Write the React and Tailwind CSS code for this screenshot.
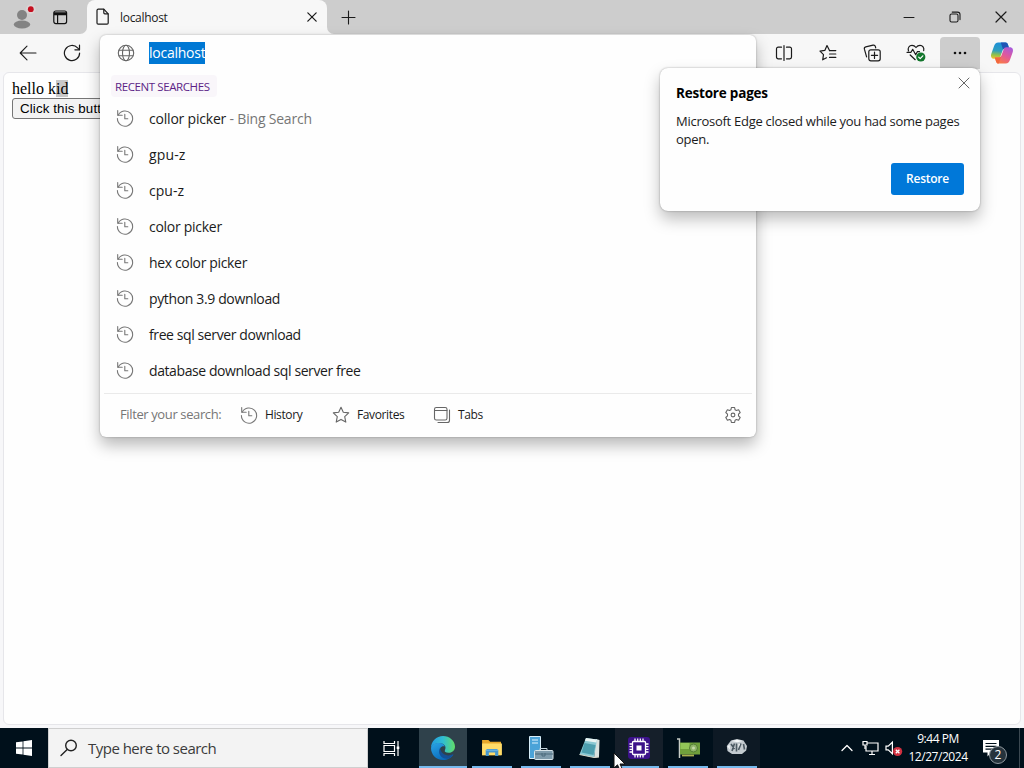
const searches = [
    { text: 'collor picker', source: 'Bing Search', tracking: 'tracking-[-0.2px]' },
    { text: 'gpu-z', tracking: 'tracking-[0.15px]' },
    { text: 'cpu-z', tracking: 'tracking-[0.05px]' },
    { text: 'color picker', tracking: 'tracking-[-0.28px]' },
    { text: 'hex color picker', tracking: 'tracking-[-0.35px]' },
    { text: 'python 3.9 download', tracking: 'tracking-[-0.36px]' },
    { text: 'free sql server download', tracking: 'tracking-[-0.4px]' },
    { text: 'database download sql server free', tracking: 'tracking-[-0.41px]' },
];

const Icon = ({ size = 18, box = 18, color = '#1b1b1b', width = 1.1, children, className = '' }) => (
    <svg
        width={size}
        height={size}
        viewBox={`0 0 ${box} ${box}`}
        fill="none"
        stroke={color}
        strokeWidth={width}
        strokeLinecap="round"
        strokeLinejoin="round"
        className={`shrink-0 ${className}`}
    >
        {children}
    </svg>
);

const HistoryIcon = () => (
    <Icon color="#777" width={1.1}>
        <path d="M2.2 6.2A7.6 7.6 0 1 1 1.4 9.6" />
        <path d="M1.7 1.6v4.6h4.5" />
        <path d="M8.8 5.3v4.4h3" />
    </Icon>
);

const CloseIcon = ({ size = 12, color = '#1b1b1b', width = 1.2 }) => (
    <Icon size={size} box={12} color={color} width={width}>
        <path d="M1 1l10 10M11 1L1 11" />
    </Icon>
);

const TabStrip = () => (
    <div className="h-[34px] shrink-0 bg-[#cdcdcd] flex items-stretch">
        <div className="w-[87px] flex items-center">
            <svg width="24" height="26" viewBox="0 0 24 26" className="ml-3">
                <circle cx="10" cy="11" r="5" fill="#838383" />
                <ellipse cx="10" cy="20.500" rx="8.2" ry="4" fill="#838383" />
                <circle cx="18.8" cy="5.2" r="4.8" fill="#dcd3d3" />
                <circle cx="18.8" cy="5.2" r="2.9" fill="#c50f1f" />
            </svg>
            <svg width="15" height="15" viewBox="0 0 15 15" fill="none" stroke="#111" className="ml-[17px]">
                <rect x="0.8" y="1" width="12.8" height="12.6" rx="2" strokeWidth="1.2" />
                <path d="M1 3h12.6M1 4.4h12.6" strokeWidth="1.6" />
                <path d="M4.6 4v9.6" strokeWidth="1.2" />
            </svg>
        </div>
        <div className="relative w-[240px] bg-[#f7f7f7] rounded-t-lg flex items-center pl-[9px] pr-[10px]">
            <svg width="7" height="7" viewBox="0 0 7 7" className="absolute -left-[7px] bottom-0">
                <path d="M7 0v7H0A7 7 0 0 0 7 0z" fill="#f7f7f7" />
            </svg>
            <svg width="7" height="7" viewBox="0 0 7 7" className="absolute -right-[7px] bottom-0">
                <path d="M0 0v7h7A7 7 0 0 1 0 0z" fill="#f7f7f7" />
            </svg>
            <Icon width={1.2}>
                <path d="M3.2 1.2h5.6l4.4 4.6v9.2a1.2 1.2 0 0 1-1.2 1.2H3.2A1.2 1.2 0 0 1 2 15V2.4a1.2 1.2 0 0 1 1.2-1.2z" transform="translate(-1 0)" />
                <path d="M7.8 1.4v3.4a1 1 0 0 0 1 1h3.2" />
            </Icon>
            <span className="mt-px ml-[6px] text-[12px] leading-4 text-[#1b1b1b] tracking-[-0.3px]">localhost</span>
            <span className="ml-auto"><CloseIcon size={10} width={1.5} /></span>
        </div>
        <div className="flex-1 flex items-center">
            <Icon size={15} box={15} className="ml-[14px]"><path d="M7.5 1v13M1 7.5h13" /></Icon>
            <div className="ml-auto flex items-center h-full">
                <div className="w-[46px] flex justify-center">
                    <Icon size={12} box={12} width={1}><path d="M1 6.5h10" /></Icon>
                </div>
                <div className="w-[46px] flex justify-center">
                    <Icon size={12} box={12}>
                        <rect x="1" y="3" width="8" height="8" rx="1.6" />
                        <path d="M3.2 1.1h5.3A2.5 2.5 0 0 1 11 3.6v5" />
                    </Icon>
                </div>
                <div className="w-[46px] flex justify-center"><CloseIcon /></div>
            </div>
        </div>
    </div>
);

const CopilotIcon = () => (
    <svg width="24" height="22" viewBox="0 0 24 22" className="shrink-0">
        <defs>
            <linearGradient id="cpA" x1="0.3" y1="0" x2="0.2" y2="1">
                <stop offset="0" stopColor="#1b8fd8" />
                <stop offset="0.5" stopColor="#2f9fbe" />
                <stop offset="0.75" stopColor="#8fc04c" />
                <stop offset="1" stopColor="#f3c62c" />
            </linearGradient>
            <linearGradient id="cpB" x1="0.9" y1="0" x2="0.3" y2="1">
                <stop offset="0" stopColor="#a45be0" />
                <stop offset="0.5" stopColor="#e0589c" />
                <stop offset="1" stopColor="#fb7a45" />
            </linearGradient>
        </defs>
        <path d="M15.600 0.500H8.300C6 0.500 4.700 2 4 4.200L1.400 11.500c-1.100 3.200.2 5.300 2.700 5.300h3.600c1.500 0 2.200-.9 2.700-2.300l2-5.600c.5-1.400 1.300-2.400 2.800-2.400h4L18 2.800C17.500 1.200 16.800 .5 15.600 .5z" fill="url(#cpA)" />
        <path d="M10.800 .5h4.800c1.200 0 1.900.7 2.400 2.300l1.200 3.700h-4c-1.200 0-1.700.3-2.200 1z" fill="#1f55b5" />
        <path d="M8.400 21.500h7.300c2.300 0 3.600-1.500 4.300-3.700l2.600-7.300c1.100-3.200-.2-5.300-2.700-5.300h-3.600c-1.500 0-2.200.9-2.700 2.300l-2 5.600c-.5 1.400-1.300 2.400-2.800 2.400H4.800L6 19.200c.5 1.600 1.200 2.300 2.400 2.300z" fill="url(#cpB)" />
        <path d="M4.800 15.500h4c1.200 0 1.700-.3 2.300-1l-2.400 7C7.200 21.500 6.500 20.800 6 19.200z" fill="#f2683c" />
    </svg>
);

const Toolbar = () => (
    <div className="h-[38px] shrink-0 bg-[#f7f7f7] flex items-center">
        <Icon className="ml-[19px]"><path d="M17 9H1.500M8 2.200L1.200 9l6.800 6.800" /></Icon>
        <Icon className="ml-[26px]" width={1.2}>
            <path d="M16.600 9A7.600 7.600 0 1 1 14.600 3.900L16.400 5.700" />
            <path d="M16.500 1.200v4.600h-4.600" />
        </Icon>
        <div className="ml-auto flex items-center h-full">
            <div className="w-11 flex justify-center">
                <Icon width={1.2}>
                    <path d="M6.500 3.200H3.200A1.700 1.700 0 0 0 1.500 4.900v8.200a1.700 1.700 0 0 0 1.700 1.700h3.300M11.500 3.200h3.300a1.700 1.700 0 0 1 1.700 1.700v8.200a1.700 1.700 0 0 1-1.700 1.700h-3.300M9 1.500v15" />
                </Icon>
            </div>
            <div className="w-11 flex justify-center">
                <Icon width={1.2}>
                    <path d="M10.500 6.600L8 1.600 5.800 6.400 1 7.100l3.500 3.600-.8 5.100 3.800-2" />
                    <path d="M10.500 6.600h6.300M10.500 10h6.300M10.500 13.400h6.300" />
                </Icon>
            </div>
            <div className="w-11 flex justify-center">
                <Icon width={1.2}>
                    <path d="M3.600 12.900L1.400 5.200a2 2 0 0 1 1.400-2.400L10 1.200a2 2 0 0 1 2.400 1.400l.3 1.200" />
                    <rect x="5.800" y="5.800" width="11.400" height="11" rx="2" />
                    <path d="M11.500 8.200v6.200M8.400 11.300h6.200" />
                </Icon>
            </div>
            <div className="w-11 flex justify-center">
                <Icon width={1.200} size={20} box={20}>
                    <path d="M2.500 8C1.400 5 3.300 2.300 6 2.300c1.700 0 3 .9 4 2.200 1-1.300 2.300-2.200 4-2.200 2.600 0 4.400 2.500 3.700 5.300" />
                    <path d="M1 9.300h4l1.700-3 3 5.400 1.600-3h2.200M4.200 12l5 4.700" />
                    <circle cx="14.800" cy="14" r="4.600" fill="#13762d" stroke="none" />
                    <path d="M12.700 14.100l1.500 1.500 2.600-2.800" stroke="#fff" />
                </Icon>
            </div>
            <div className="w-10 h-8 ml-[2px] rounded-t bg-[#cdcdcd] flex justify-center items-center">
                <svg width="16" height="4" viewBox="0 0 16 4" fill="#111" className="-mt-px">
                    <circle cx="3" cy="2" r="1.300" /><circle cx="8" cy="2" r="1.300" /><circle cx="13" cy="2" r="1.300" />
                </svg>
            </div>
            <div className="w-11 flex justify-center"><CopilotIcon /></div>
        </div>
    </div>
);

const FilterButton = ({ label, className, children }) => (
    <div className={`flex items-center gap-[7px] ${className}`}>
        {children}
        <span className="text-[12px] text-[#1b1b1b] tracking-[-0.38px]">{label}</span>
    </div>
);

const AddressDropdown = () => (
    <div className="absolute left-[100px] top-[35px] w-[656px] h-[402px] bg-[#fefefe] rounded-[6px] shadow-[0_0_2px_rgba(0,0,0,0.3),0_8px_16px_rgba(0,0,0,0.28)] flex flex-col">
        <div className="h-9 flex items-center pl-[17px]">
            <Icon color="#666">
                <circle cx="9" cy="9" r="7.700" />
                <ellipse cx="9" cy="9" rx="3.500" ry="7.700" />
                <path d="M2 6.200h14M2 11.800h14" />
            </Icon>
            <span className="ml-[14px] h-[22px] w-[56px] bg-[#0078d4] text-white text-[14px] leading-[22px] tracking-[-0.25px] whitespace-nowrap">localhost</span>
        </div>
        <div className="h-[30px] flex items-center pl-[11px]">
            <span className="w-[106px] h-[22px] pl-1 rounded bg-[#f9f6fa] text-[11.500px] leading-[23px] text-[#5c1f87] tracking-[-0.4px] whitespace-nowrap">RECENT SEARCHES</span>
        </div>
        <div className="flex flex-col">
            {searches.map((s) => (
                <div key={s.text} className="h-9 flex items-center pl-4">
                    <span className="-mt-[3px]"><HistoryIcon /></span>
                    <span className={`-mt-[2px] ml-[15px] text-[14px] text-[#1b1b1b] whitespace-nowrap ${s.tracking}`}>
                        {s.text}
                        {s.source && <span className="text-[#767676]"> - {s.source}</span>}
                    </span>
                </div>
            ))}
        </div>
        <div className="mt-1 mx-1 border-t border-[#eaeaea]" />
        <div className="h-[42px] flex items-center pl-5 pr-[14px]">
            <span className="w-[102px] text-[13px] text-[#767676] tracking-[-0.38px] whitespace-nowrap">Filter your search:</span>
            <FilterButton label="History" className="ml-[18px] w-[92px]"><HistoryIcon /></FilterButton>
            <FilterButton label="Favorites" className="w-[101px]">
                <Icon color="#666">
                    <path d="M9 1.300l2.300 5 5.400.6-4 3.700 1.100 5.500L9 13.400l-4.800 2.700 1.100-5.500-4-3.700 5.400-.6z" />
                </Icon>
            </FilterButton>
            <FilterButton label="Tabs">
                <Icon color="#666">
                    <rect x="1.500" y="1.500" width="12.500" height="12.500" rx="1.800" />
                    <path d="M1.500 4.500H14M16.500 4v10.200a2.300 2.300 0 0 1-2.300 2.300H5" />
                </Icon>
            </FilterButton>
            <Icon className="ml-auto" color="#666">
                <path d="M7.400 1.500h3.200l.5 2.300 1.300.7 2.200-.8 1.600 2.800-1.700 1.600v1.800l1.700 1.600-1.600 2.800-2.200-.8-1.300.7-.5 2.300H7.400l-.5-2.300-1.300-.7-2.200.8-1.600-2.800 1.700-1.600V8.100L1.800 6.500l1.600-2.800 2.200.8 1.300-.7z" />
                <circle cx="9" cy="9" r="1.900" />
            </Icon>
        </div>
    </div>
);

const RestoreDialog = () => (
    <div className="absolute left-[660px] top-[68px] w-[320px] h-[143px] bg-[#fefefe] rounded-lg shadow-[0_0_2px_rgba(0,0,0,0.35),0_8px_16px_rgba(0,0,0,0.26)] pl-4 pr-[10px] flex flex-col">
        <div className="flex items-start justify-between pt-[9px]">
            <h2 className="mt-[7px] text-[13.500px] leading-[18px] font-bold text-black tracking-[-0.2px]">Restore pages</h2>
            <CloseIcon color="#555" width={0.9} />
        </div>
        <p className="mt-[10px] w-[300px] text-[13px] leading-[18px] text-[#1b1b1b] tracking-[-0.27px]">
            Microsoft Edge closed while you had some pages<br />open.
        </p>
        <button className="mt-[15px] ml-auto mr-[6px] w-[73px] h-8 rounded-[3px] bg-[#0078d9] text-white text-[12px] font-semibold tracking-[-0.25px]">Restore</button>
    </div>
);

const TaskItem = ({ width, bg = '', bar = 'w-10', children }) => (
    <div className={`relative h-10 flex justify-center items-center ${width} ${bg}`}>
        {children}
        <span className={`absolute bottom-0 h-[2px] bg-[#76b9ed] ${bar}`} />
    </div>
);

const Taskbar = () => (
    <div className="h-10 shrink-0 bg-[#00101b] flex items-center">
        <div className="w-12 flex justify-center">
            <svg width="16" height="16" viewBox="0 0 16 16" fill="#fff">
                <path d="M0 2.300l6.600-.9v6.200H0zM7.400 1.200L16 0v7.600H7.400zM0 8.400h6.600v6.200L0 13.700zM7.400 8.400H16V16l-8.600-1.200z" />
            </svg>
        </div>
        <div className="w-80 h-10 bg-[#f3f3f3] border border-[#cfcfcf] flex items-center pl-[11px]">
            <Icon width={1.400} color="#222"><circle cx="11" cy="6.500" r="5.300" /><path d="M7.200 10.400L1 16.600" /></Icon>
            <span className="ml-[10px] text-[15px] text-[#3b3b3b] tracking-[-0.52px]">Type here to search</span>
        </div>
        <div className="w-[51px] pl-[15px]">
            <svg width="17" height="17" viewBox="0 0 17 17" fill="none" stroke="#fff" strokeWidth="1.200">
                <path d="M1 1v2.500h10.500V1M1 16v-2.500h10.500V16M1 5.500h10.500v6H1zM15 1v15" />
                <path d="M13.700 6.500h2.600v2.600h-2.600z" fill="#fff" stroke="none" />
            </svg>
        </div>
        <TaskItem width="w-12" bg="bg-[#2f414b]" bar="w-12">
            <svg width="26" height="26" viewBox="0 0 26 26">
                <defs>
                    <linearGradient id="edgeTop" x1="0" y1="0.500" x2="1" y2="0.500">
                        <stop offset="0" stopColor="#239be0" />
                        <stop offset="0.500" stopColor="#30bdd2" />
                        <stop offset="1" stopColor="#61dc68" />
                    </linearGradient>
                    <linearGradient id="edgeBody" x1="0" y1="0" x2="0.600" y2="1">
                        <stop offset="0" stopColor="#2aa4e6" />
                        <stop offset="1" stopColor="#0868ba" />
                    </linearGradient>
                </defs>
                <path d="M1 13C1 6 6.500 1 13 1s12 5 12 10.500c0 4-3 6.300-6.500 6.300-3 0-4.300-1.200-3.600-2.500 2-4-1-7-5-7C5 8.300 1.700 10 1 13z" fill="url(#edgeTop)" />
                <path d="M1 13c.7-3.500 4-4.900 8-4.900 3 0 5.200 1.500 5.900 3.400-3.700-1-5.700 2-4.700 5 1.300 4 7 6.500 13.200 3C21.500 23 17.500 25 13 25 6 25 1 19.500 1 13z" fill="url(#edgeBody)" />
                <path d="M10 13c-3 6 2 11.500 8 10.800 2.500-1 4.500-2.800 5.400-4.800-6.200 3.500-12.400 0-13.400-6z" fill="#145096" />
            </svg>
        </TaskItem>
        <TaskItem width="w-[50px]">
            <svg width="22" height="18" viewBox="0 0 24 20">
                <path d="M1 1h7l2 2h12v15H1z" fill="#e7a82c" />
                <path d="M1 5h22v13H1z" fill="#ffdc68" />
                <path d="M5 19v-6.500l1.500-1.500h11l1.500 1.500V19h-3.500v-4h-7v4z" fill="#4698cf" />
                <path d="M5 12.500h14" stroke="#78bee8" />
            </svg>
        </TaskItem>
        <TaskItem width="w-12">
            <svg width="26" height="26" viewBox="0 0 26 26" className="-mt-px">
                <path d="M1.500 1.500h11v22h-11z" fill="#4ba3d8" stroke="#d8eef9" />
                <path d="M4 5h6M4 8h6" stroke="#dff4ff" />
                <path d="M12 15v-1.500h7V15" stroke="#c4d5dd" fill="none" />
                <rect x="6.500" y="15.500" width="18.500" height="9" rx="1" fill="#7e9bac" stroke="#d6e3e9" />
                <path d="M7 19h18M14 18v3h3v-3" stroke="#4b6a7c" fill="none" />
            </svg>
        </TaskItem>
        <TaskItem width="w-[50px]">
            <svg width="24" height="24" viewBox="0 0 24 24">
                <path d="M18 3l3.500 1-.5 17-5 1z" fill="#d9e2df" />
                <path d="M8 2l11 1.500-3 18-14.500-3z" fill="#8bc9d3" />
                <path d="M6.500 7l11 2-2 10-12-2.500z" fill="#4d9eae" />
                <path d="M8 2l11 1.500-.7 3L6.800 4.700z" fill="#e9f4f3" />
                <path d="M1.500 18.500l14.500 3 5-.5" stroke="#d8d6c8" fill="none" />
            </svg>
        </TaskItem>
        <TaskItem width="w-[48px]" bg="bg-[#151f2a]">
            <svg width="22" height="22" viewBox="0 0 22 22">
                <rect width="22" height="22" rx="3" fill="#3c128a" />
                <g fill="none" stroke="#fff" strokeWidth="1.300">
                    <rect x="4.500" y="4.500" width="13" height="13" rx="1" />
                    <path d="M7 1.500v3M9.700 1.500v3M12.300 1.500v3M15 1.500v3M7 17.500v3M9.700 17.500v3M12.300 17.500v3M15 17.500v3M1.500 7h3M1.500 9.700h3M1.500 12.300h3M1.500 15h3M17.500 7h3M17.500 9.700h3M17.500 12.300h3M17.500 15h3" />
                </g>
                <rect x="8.500" y="8.500" width="5" height="5" fill="#fff" />
            </svg>
        </TaskItem>
        <TaskItem width="w-[50px]">
            <svg width="25" height="21" viewBox="0 0 25 21">
                <path d="M1 1h2.500v19" fill="none" stroke="#c8cdc8" strokeWidth="1.500" />
                <path d="M4 4.500h20v12H4z" fill="#6fa03c" />
                <path d="M4.500 5h9v6h-9z" fill="#92c658" />
                <circle cx="17.500" cy="10" r="4" fill="#8fb56a" stroke="#547f35" />
                <circle cx="17.500" cy="10" r="1.500" fill="#c4d8a8" />
                <path d="M6 17.500h12" stroke="#a9b04f" strokeWidth="1.800" />
            </svg>
        </TaskItem>
        <TaskItem width="w-[47px]" bg="bg-[#0d1924]">
            <svg width="22" height="16" viewBox="0 0 22 16" className="-mt-[2px]">
                <path d="M5 1.500L11 0l6.500 1.500L21 7l-.8 4.500L16 15H6l-4.500-3L.8 7z" fill="#c3cacf" />
                <path d="M5 5l3.500 5M8.500 4.500L6 12M15 4.500L12.500 11M17.500 5l1 5.500M10.500 4.500v8" fill="none" stroke="#4d5a63" strokeWidth="1.600" />
                <path d="M5.500 2L11 .8l5.500 1.200-5 1.200zM1.500 7.500l2-2 .5 5zM12.500 5h1.500l-1.500 4z" fill="#f4f7f8" />
            </svg>
        </TaskItem>
        <div className="ml-auto flex items-center">
            <Icon size={14} box={14} color="#fff" width={1.300}><path d="M2 9.500l5-5 5 5" /></Icon>
            <svg width="17" height="16" viewBox="0 0 17 16" fill="none" stroke="#fff" strokeWidth="1.200" className="ml-[8px]">
                <path d="M5 3h11v8H4V6M7 14.500h6M10 11v3.500" />
                <path d="M1 1.500h4V5H1zM3 5v4" />
            </svg>
            <svg width="18" height="17" viewBox="0 0 18 17" fill="none" className="ml-[6px]">
                <path d="M1 6.200h2.200l4.200-4v11.600l-4.200-4H1z" stroke="#fff" strokeWidth="1.200" />
                <circle cx="12.600" cy="11.500" r="4.600" fill="#d13040" />
                <path d="M10.800 9.700l3.600 3.600M14.400 9.700l-3.600 3.600" stroke="#fff" strokeWidth="1.300" />
            </svg>
            <div className="w-[62px] ml-[4px] text-center text-[12px] leading-[18px] text-white tracking-[-0.45px] whitespace-nowrap">
                <div>9:44 PM</div>
                <div>12/27/2024</div>
            </div>
            <div className="relative ml-[12px] w-[43px] h-10">
                <svg width="18" height="18" viewBox="0 0 18 18" className="absolute left-[2px] top-3">
                    <path d="M0 0h16v12.500H8l-3.500 4v-4H0z" fill="#fff" />
                    <path d="M2.500 3.500h11M2.500 6.300h11M2.500 9.100h11" stroke="#00101b" strokeWidth="1.200" />
                </svg>
                <span className="absolute left-[8px] top-[18px] w-[18px] h-[18px] rounded-full bg-[#26333c] border border-[#8e979d] text-white text-[12px] leading-4 text-center">2</span>
                <span className="absolute right-[4px] top-0 h-10 border-l border-[#3b4851]" />
            </div>
        </div>
    </div>
);

export default function App() {
    return (
        <div className="relative w-[1024px] h-[768px] overflow-hidden bg-[#f7f7f9] flex flex-col font-['Open_Sans','Noto_Sans',sans-serif]">
            <TabStrip />
            <Toolbar />
            <main className="flex-1 mx-[3px] mb-[3px] bg-[#fefefe] border border-[#e6e6ea] rounded-[6px] pl-[8px] pt-[7px] flex flex-col items-start">
                <p className="font-['Liberation_Serif',serif] text-[16px] leading-[18px] text-black">
                    hello k<span className="bg-[#c8c8c8]">id</span>
                </p>
                <button className="h-[21px] px-[7px] border border-[#767676] rounded-[3px] bg-[#f3f3f3] text-black font-['Liberation_Sans',sans-serif] text-[13.333px] leading-[18px] tracking-[0.12px]">
                    Click this button
                </button>
            </main>
            <Taskbar />
            <AddressDropdown />
            <RestoreDialog />
            {/* mouse pointer */}
            <svg width="13" height="20" viewBox="0 0 13 20" className="absolute left-[613px] top-[752px]">
                <path d="M1 1v15l3.500-3.200L7 18.500l2.500-1.100L7 12h5z" fill="#fff" stroke="#111" />
            </svg>
        </div>
    );
}
